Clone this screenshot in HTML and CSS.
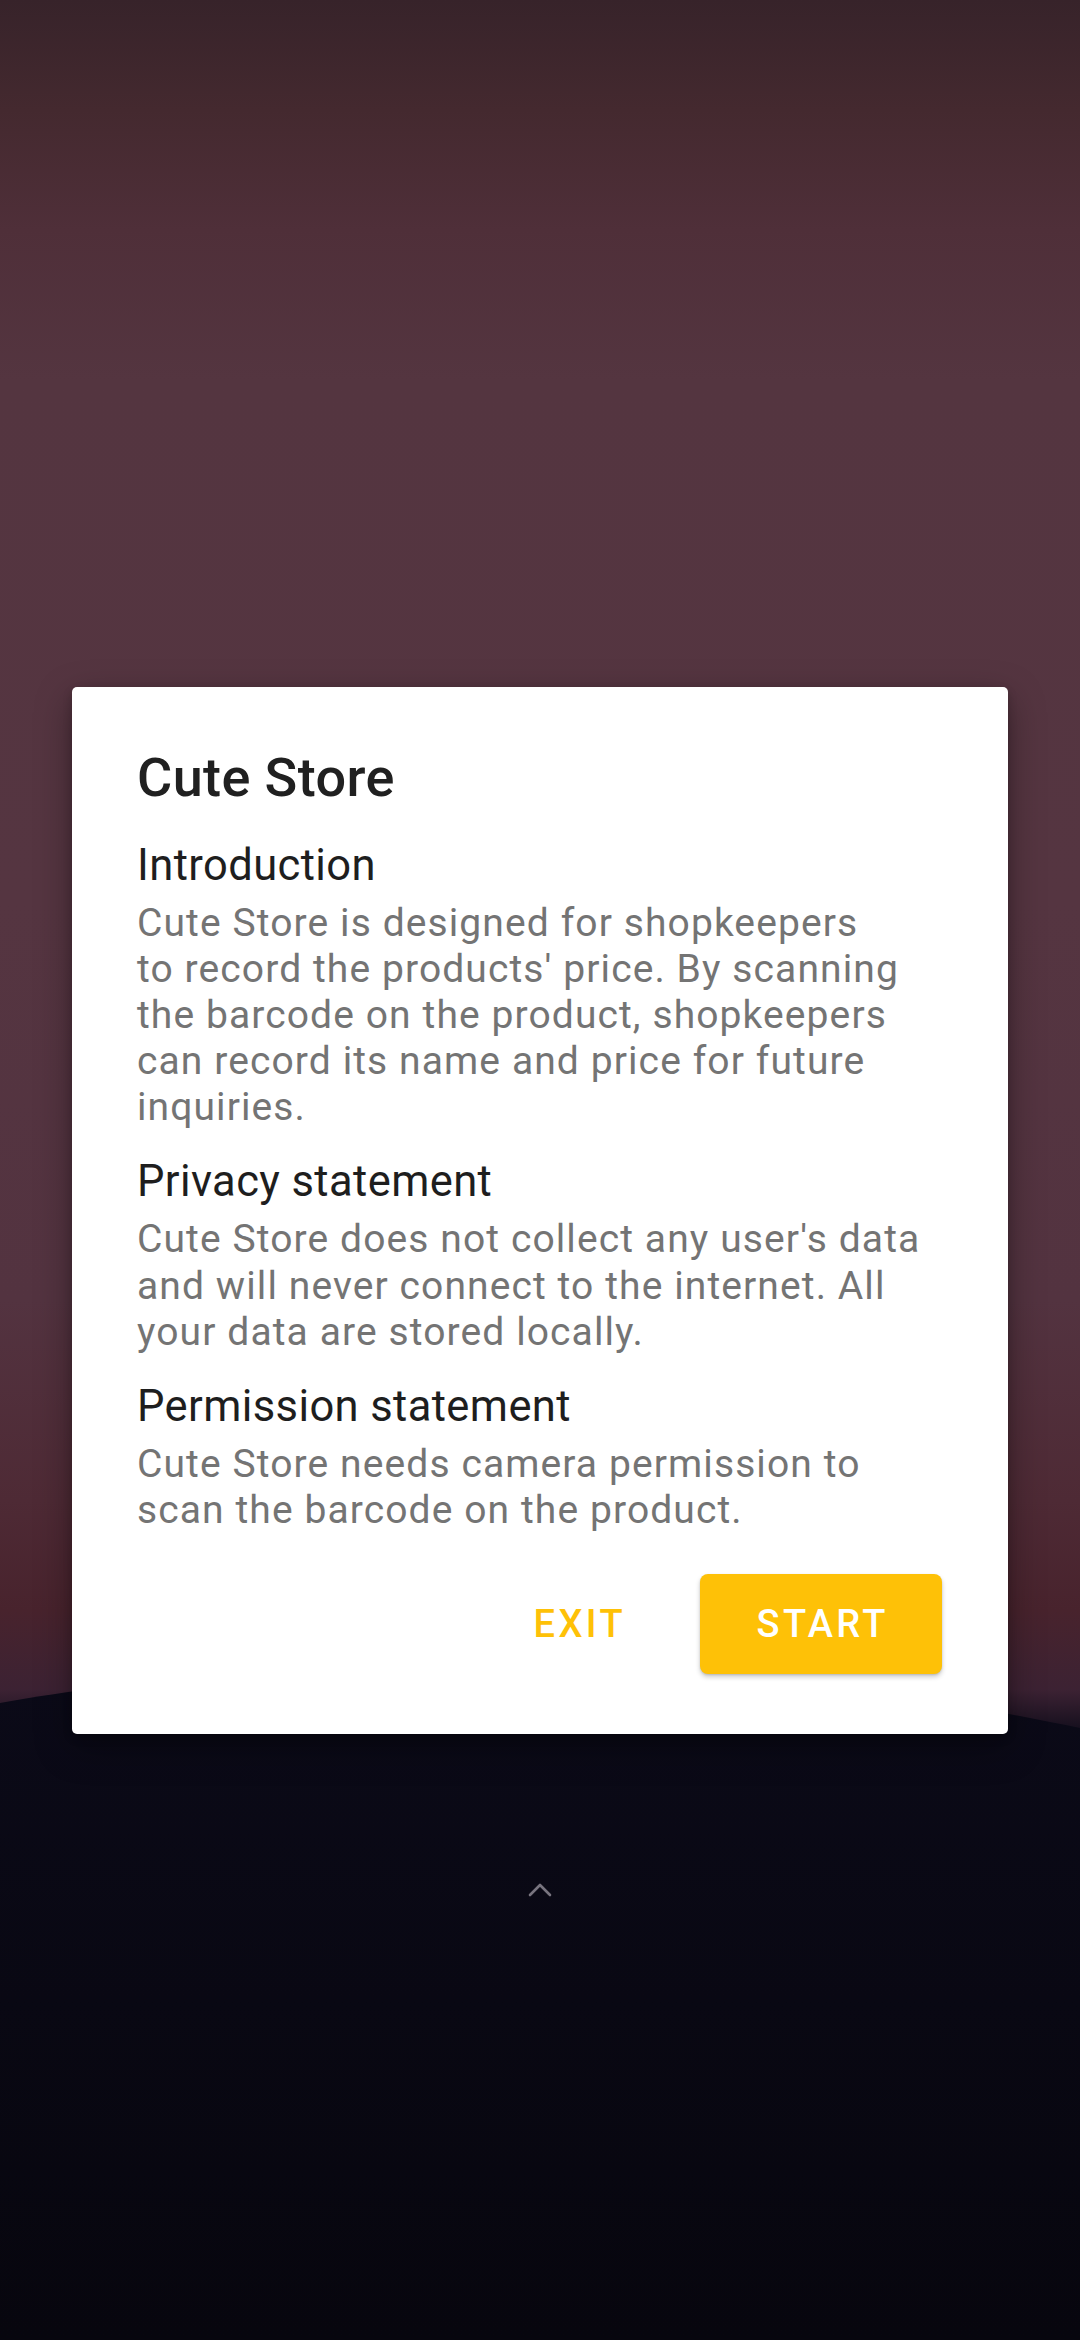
FILE: index.html
```html
<!DOCTYPE html>
<html lang="en">
<head>
<meta charset="utf-8">
<title>Cute Store</title>
<link rel="stylesheet" href="styles.css">
</head>
<body>
<div class="wallpaper" aria-hidden="true">
  <svg class="hill" width="1080" height="2340" viewBox="0 0 1080 2340">
    <defs>
      <linearGradient id="hillg" x1="0" y1="0" x2="0" y2="1">
        <stop offset="0" stop-color="#0b0a18"/>
        <stop offset="1" stop-color="#07060e"/>
      </linearGradient>
    </defs>
    <path d="M0 1703 C 120 1682, 300 1660, 540 1662 C 760 1664, 940 1700, 1080 1728 L1080 2340 L0 2340 Z" fill="url(#hillg)"/>
  </svg>
</div>
<main class="screen">
  <section class="dialog">
    <h1 class="title">Cute Store</h1>
    <div class="sec">
      <h2 class="sec-title">Introduction</h2>
      <p class="sec-text">Cute Store is designed for shopkeepers<br>to record the products' price. By scanning<br>the barcode on the product, shopkeepers<br>can record its name and price for future<br>inquiries.</p>
    </div>
    <div class="sec">
      <h2 class="sec-title">Privacy statement</h2>
      <p class="sec-text">Cute Store does not collect any user's data<br>and will never connect to the internet. All<br>your data are stored locally.</p>
    </div>
    <div class="sec">
      <h2 class="sec-title">Permission statement</h2>
      <p class="sec-text">Cute Store needs camera permission to<br>scan the barcode on the product.</p>
    </div>
    <div class="actions">
      <button class="btn-text">EXIT</button>
      <button class="btn-filled">START</button>
    </div>
  </section>
  <div class="hint">
    <svg width="24" height="16" viewBox="0 0 24 16"><polyline points="2,13 12,3 22,13" fill="none" stroke="#78747f" stroke-width="2.6" stroke-linecap="round" stroke-linejoin="round"/></svg>
  </div>
</main>
</body>
</html>
```
FILE: styles.css
```css
html, body {
  margin: 0;
  padding: 0;
}
body {
  width: 1080px;
  height: 2340px;
  overflow: hidden;
  position: relative;
  font-family: Roboto, "Noto Sans", "Liberation Sans", sans-serif;
  background: linear-gradient(180deg,
    #37232a 0px,
    #44292f 110px,
    #4f2f39 230px,
    #543540 380px,
    #553541 900px,
    #533340 1300px,
    #4e2a35 1500px,
    #48232d 1610px,
    #3c2233 1690px,
    #0b0a18 1740px,
    #07060e 2340px);
}
.wallpaper {
  position: absolute;
  inset: 0;
  z-index: 0;
}
.hill {
  display: block;
}
.screen {
  position: relative;
  z-index: 1;
  padding-top: 687px;
}
.dialog {
  margin: 0 72px;
  background: #ffffff;
  border-radius: 5px;
  padding: 59px 66px 60px 65px;
  box-shadow: 0 12px 36px rgba(0, 0, 0, 0.35), 0 4px 10px rgba(0, 0, 0, 0.2);
}
.title {
  margin: 0 0 31.5px;
  font-size: 54px;
  line-height: 63px;
  font-weight: 500;
  letter-spacing: 0.4px;
  color: #202020;
}
.sec + .sec {
  margin-top: 27.5px;
}
.sec-title {
  margin: 0 0 9px;
  font-size: 43.5px;
  line-height: 50px;
  font-weight: 400;
  letter-spacing: 0.4px;
  color: #1e1e1e;
}
.sec-text {
  margin: 0;
  font-size: 39px;
  line-height: 46.1px;
  font-weight: 400;
  letter-spacing: 1.1px;
  color: #747474;
  white-space: nowrap;
}
.actions {
  margin-top: 40.5px;
  display: flex;
  justify-content: flex-end;
  align-items: center;
}
.btn-text, .btn-filled {
  font-family: Roboto, "Noto Sans", "Liberation Sans", sans-serif;
  font-size: 38px;
  font-weight: 500;
  letter-spacing: 3.4px;
  border: none;
  height: 100px;
  padding: 0;
  cursor: pointer;
}
.btn-text {
  background: transparent;
  color: #fec107;
  margin-right: 74px;
}
.btn-filled {
  width: 242px;
  background: #fec107;
  color: #ffffff;
  border-radius: 8px;
  padding-left: 3.4px;
  box-shadow: 0 3px 5px rgba(0, 0, 0, 0.2), 0 1px 2px rgba(0, 0, 0, 0.12);
}
.hint {
  display: flex;
  justify-content: center;
  margin-top: 148px;
}
.hint svg {
  display: block;
}
```
